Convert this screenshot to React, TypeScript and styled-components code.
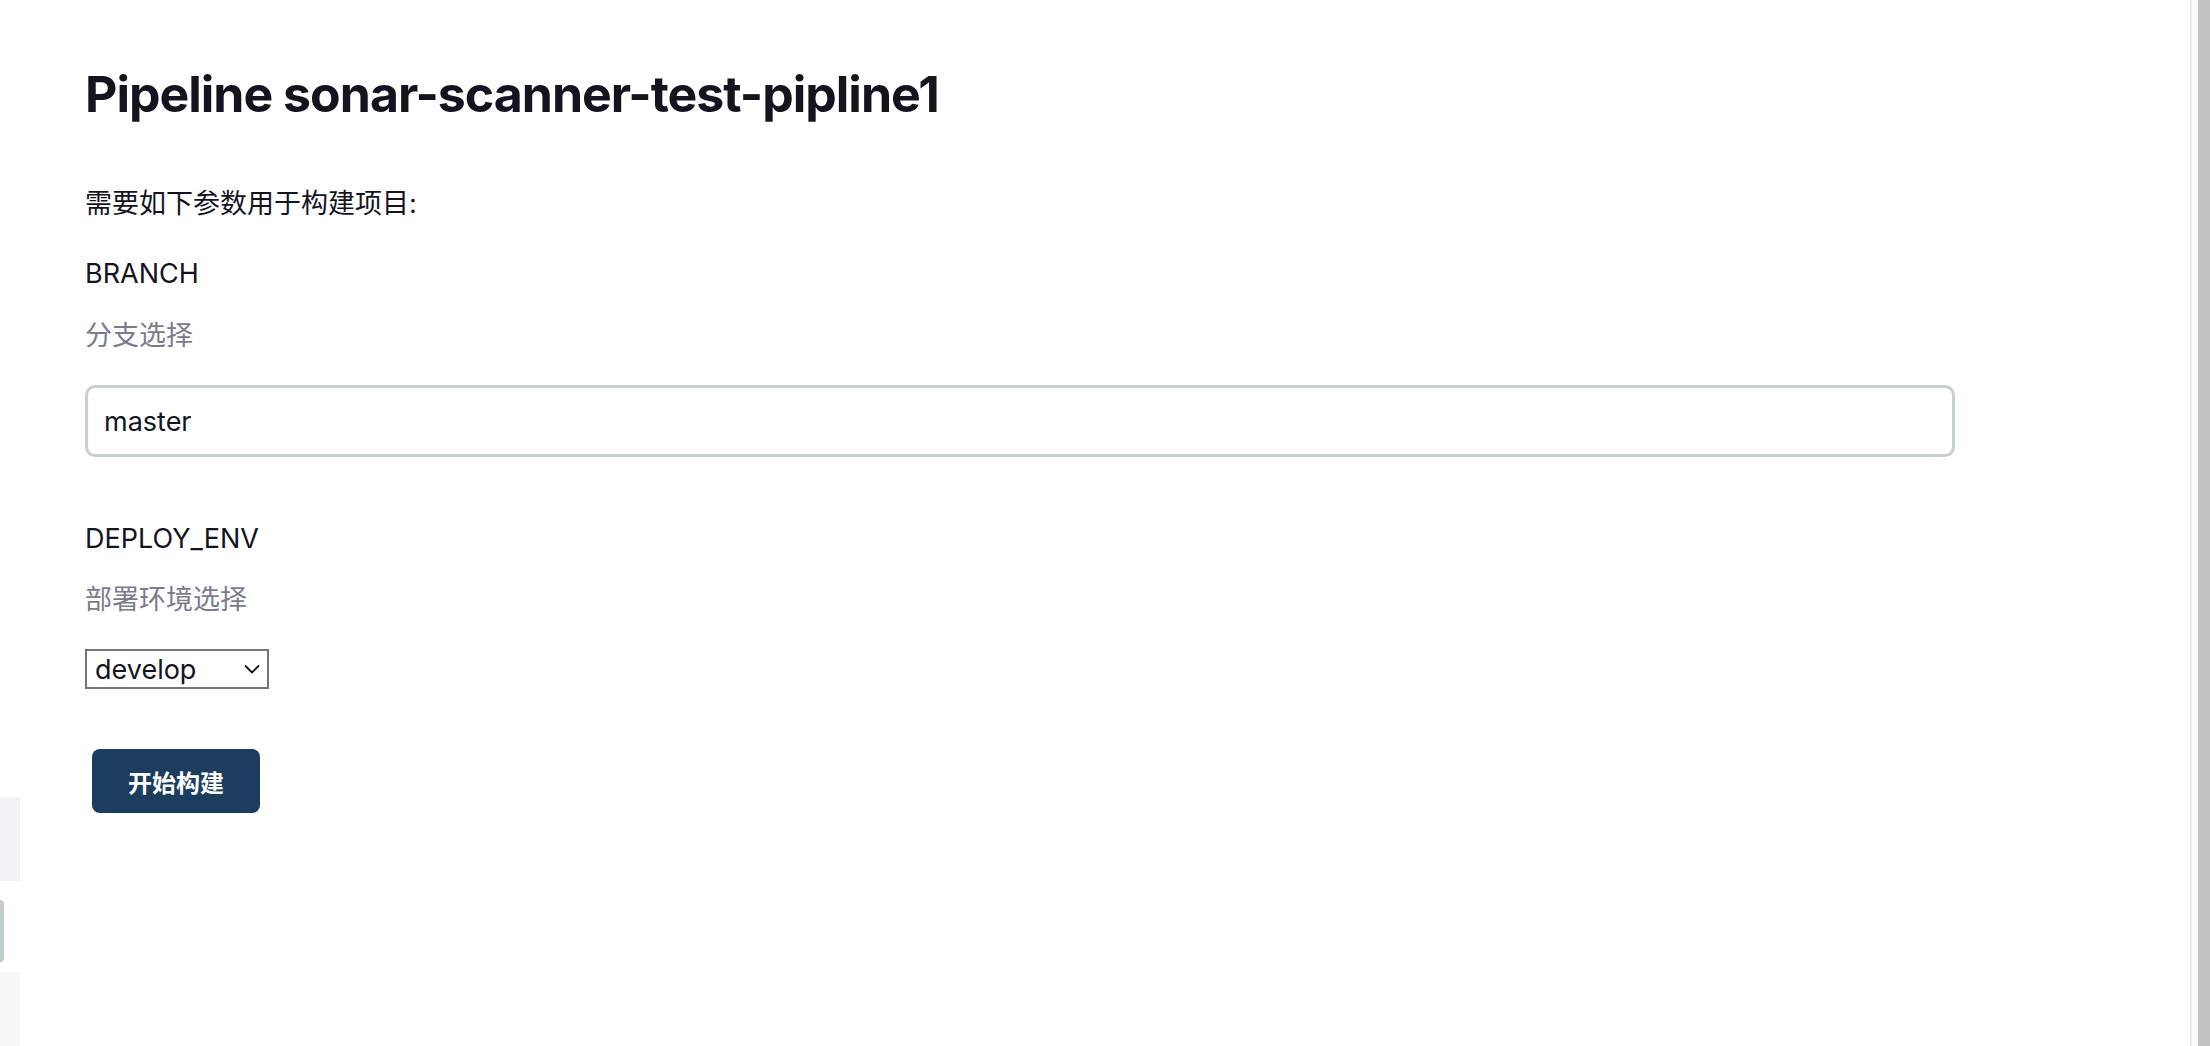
import React from "react";
import styled, { createGlobalStyle } from "styled-components";

const Global = createGlobalStyle`
  html, body { margin: 0; padding: 0; background: #ffffff; }
  body { font-family: Inter, "Noto Sans CJK SC", sans-serif; color: #14141f; }
  * { box-sizing: border-box; }
`;

const Page = styled.div`
  display: flex;
  width: 2210px;
  height: 1046px;
  overflow: hidden;
  background: #ffffff;
`;

const SideStrip = styled.div`
  width: 20px;
  flex: none;
  display: flex;
  flex-direction: column;
`;

const StripBlock = styled.div<{ $top: number; $h: number; $w: number; $bg: string; $rounded?: boolean }>`
  margin-top: ${(p) => p.$top}px;
  height: ${(p) => p.$h}px;
  width: ${(p) => p.$w}px;
  background: ${(p) => p.$bg};
  border-radius: ${(p) => (p.$rounded ? "0 4px 4px 0" : "0")};
  flex: none;
`;

const Main = styled.main`
  flex: 1;
  padding: 64px 0 0 65px;
  display: flex;
  flex-direction: column;
  align-items: flex-start;
`;

const Title = styled.h1`
  margin: 0;
  font-family: Inter, "Noto Sans CJK SC", sans-serif;
  font-weight: 700;
  font-size: 50px;
  line-height: 60px;
  letter-spacing: -1px;
  color: #14141f;
`;

const Intro = styled.p`
  margin: 62px 0 0;
  font-size: 27px;
  line-height: 36px;
  color: #14141f;
`;

const ParamName = styled.div<{ $gap: number }>`
  margin-top: ${(p) => p.$gap}px;
  font-size: 27px;
  line-height: 36px;
  color: #14141f;
`;

const ParamDesc = styled.div<{ $gap: number }>`
  margin-top: ${(p) => p.$gap}px;
  font-size: 27px;
  line-height: 36px;
  color: #7b7a8e;
`;

const TextInput = styled.input`
  margin-top: 31px;
  width: 1870px;
  height: 72px;
  border: 3px solid #c6cfd2;
  border-radius: 10px;
  padding: 0 16px;
  font-family: Inter, "Noto Sans CJK SC", sans-serif;
  font-size: 27px;
  color: #14141f;
  background: #ffffff;
  outline: none;
`;

const SelectWrap = styled.div`
  position: relative;
  margin-top: 31px;
  width: 184px;
  height: 40px;
`;

const Select = styled.select`
  appearance: none;
  -webkit-appearance: none;
  width: 184px;
  height: 40px;
  border: 2px solid #767676;
  border-radius: 0;
  background: #ffffff;
  padding: 0 0 0 8px;
  font-family: Inter, "Noto Sans CJK SC", sans-serif;
  font-size: 27px;
  color: #14141f;
  outline: none;
`;

const Chevron = styled.svg`
  position: absolute;
  right: 9px;
  top: 15px;
  pointer-events: none;
`;

const BuildButton = styled.button`
  margin: 60px 0 0 7px;
  width: 168px;
  height: 64px;
  border: none;
  border-radius: 8px;
  background: #1c3d5e;
  color: #ffffff;
  font-family: "Noto Sans CJK SC", Inter, sans-serif;
  font-weight: 600;
  font-size: 24px;
  cursor: pointer;
`;

const Scrollbar = styled.div`
  width: 20px;
  flex: none;
  display: flex;
`;

const ScrollEdge = styled.div`
  width: 2px;
  background: #ebebeb;
`;

const ScrollTrack = styled.div`
  width: 6px;
  background: #fafafa;
`;

const ScrollThumb = styled.div`
  width: 12px;
  background: #c1c1c1;
`;

export default function App() {
  return (
    <>
      <Global />
      <Page>
        <SideStrip>
          <StripBlock $top={797} $h={84} $w={20} $bg="#f2f2f6" />
          <StripBlock $top={19} $h={62} $w={4} $bg="#c3cacd" $rounded />
          <StripBlock $top={10} $h={74} $w={20} $bg="#f6f6f8" />
        </SideStrip>
        <Main>
          <Title>Pipeline sonar-scanner-test-pipline1</Title>
          <Intro>需要如下参数用于构建项目:</Intro>
          <ParamName $gap={34}>BRANCH</ParamName>
          <ParamDesc $gap={26}>分支选择</ParamDesc>
          <TextInput defaultValue="master" />
          <ParamName $gap={64}>DEPLOY_ENV</ParamName>
          <ParamDesc $gap={25}>部署环境选择</ParamDesc>
          <SelectWrap>
            <Select defaultValue="develop">
              <option value="develop">develop</option>
              <option value="test">test</option>
              <option value="prod">prod</option>
            </Select>
            <Chevron width="16" height="10" viewBox="0 0 16 10">
              <path d="M1 1.5 L8 8.5 L15 1.5" fill="none" stroke="#14141f" strokeWidth="1.8" />
            </Chevron>
          </SelectWrap>
          <BuildButton>开始构建</BuildButton>
        </Main>
        <Scrollbar>
          <ScrollEdge />
          <ScrollTrack />
          <ScrollThumb />
        </Scrollbar>
      </Page>
    </>
  );
}
